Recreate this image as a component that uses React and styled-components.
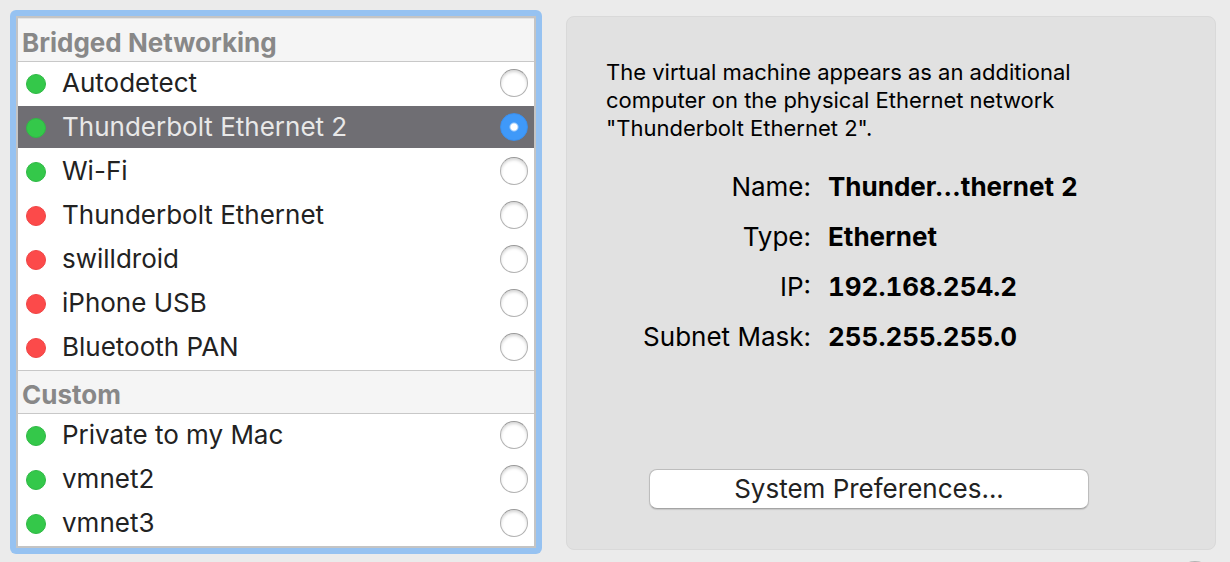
import React, { useState } from "react";
import styled, { createGlobalStyle } from "styled-components";

const GlobalStyle = createGlobalStyle`
  * { box-sizing: border-box; }
  body {
    margin: 0;
    overflow: hidden;
    background: #ebebeb;
    color: #000;
    font-family: Inter, "Liberation Sans", sans-serif;
    font-size: 26px;
  }
`;

const Page = styled.main`
  display: grid;
  grid-template-columns: 532fr 650fr;
  column-gap: 24px;
  align-items: start;
  padding: 10px 14px 0 10px;
`;

const NetworkList = styled.form`
  border-radius: 6px;
  padding: 6px;
  background: #96c2f1;
`;

const ListFrame = styled.div`
  border: 2px solid #c4c4c4;
  background: #fff;
`;

const Group = styled.fieldset`
  margin: 0;
  padding: 0;
  border: 0;
  min-width: 0;
`;

const GroupTitle = styled.legend`
  display: block;
  width: 100%;
  height: 44px;
  padding: 4px 4px 0;
  border-top: 1px solid ${(p) => (p.$first ? "#e4e4e4" : "#c8c8c8")};
  border-bottom: 1px solid #c8c8c8;
  background: #f5f5f5;
  color: #888;
  font-weight: 700;
  line-height: 40px;
`;

const Row = styled.label`
  display: flex;
  align-items: center;
  height: 44px;
  padding: 0 6px 0 8px;
  border-bottom: 2px solid #fff;
  background: ${(p) => (p.$selected ? "#6f6e73" : "#fff")};
  color: ${(p) => (p.$selected ? "#e8e8e8" : "#222")};
`;

const Status = styled.span`
  width: 20px;
  height: 20px;
  margin: 2px 16px 0 0;
  border-radius: 50%;
  border: 1px solid ${(p) => (p.$up ? "#2fb945" : "#f04545")};
  background: ${(p) => (p.$up ? "#34c84a" : "#fc4a4a")};
`;

const RowName = styled.span`
  flex: 1;
  line-height: 42px;
`;

const Radio = styled.input`
  appearance: none;
  width: 28px;
  height: 28px;
  margin: 0;
  border: 1px solid #b2b2b2;
  border-top-color: #989898;
  border-radius: 50%;
  background: #fff;
  box-shadow: inset 0 2px 3px rgba(0, 0, 0, 0.16);

  &:checked {
    border-color: #3a8fee;
    background: radial-gradient(circle, #fff 0 3px, #3f99f9 5px);
    box-shadow: none;
  }
`;

const Side = styled.div`
  display: flex;
  flex-direction: column;
  padding-top: 6px;
`;

const Details = styled.section`
  display: flex;
  flex-direction: column;
  padding: 41px 39px 40px;
  border: 1px solid #d9d9d9;
  border-radius: 8px;
  background: #e1e1e1;
`;

const Description = styled.p`
  max-width: 490px;
  margin: 0 0 20px;
  font-size: 22px;
  line-height: 28px;
`;

const Facts = styled.dl`
  display: grid;
  grid-template-columns: 205px 1fr;
  column-gap: 17px;
  margin: 0 0 107px;
  line-height: 50px;
`;

const FactName = styled.dt`
  text-align: right;
`;

const FactValue = styled.dd`
  margin: 0;
  font-weight: 700;
  font-variant-numeric: tabular-nums;
`;

const PreferencesButton = styled.button`
  width: 440px;
  height: 40px;
  margin-left: 43px;
  padding: 0 0 2px;
  border: 1px solid #bdbdbd;
  border-bottom-color: #a4a4a4;
  border-radius: 8px;
  background: #fff;
  box-shadow: 0 1px 1px rgba(0, 0, 0, 0.12);
  color: #222;
  font: inherit;
`;

const HelpButton = styled.button`
  align-self: flex-end;
  width: 42px;
  height: 42px;
  margin-top: 11px;
  border: 1px solid #b2b2b2;
  border-radius: 50%;
  background: #fff;
`;

const groups = [
  {
    title: "Bridged Networking",
    items: [
      ["Autodetect", true],
      ["Thunderbolt Ethernet 2", true],
      ["Wi-Fi", true],
      ["Thunderbolt Ethernet", false],
      ["swilldroid", false],
      ["iPhone USB", false],
      ["Bluetooth PAN", false],
    ],
  },
  {
    title: "Custom",
    items: [
      ["Private to my Mac", true],
      ["vmnet2", true],
      ["vmnet3", true],
    ],
  },
];

const facts = [
  ["Name:", "Thunder…thernet 2"],
  ["Type:", "Ethernet"],
  ["IP:", "192.168.254.2"],
  ["Subnet Mask:", "255.255.255.0"],
];

export default function App() {
  const [selected, setSelected] = useState("Thunderbolt Ethernet 2");
  return (
    <>
      <GlobalStyle />
      <Page>
        <NetworkList>
          <ListFrame>
            {groups.map((group, i) => (
              <Group key={group.title}>
                <GroupTitle $first={i === 0}>{group.title}</GroupTitle>
                {group.items.map(([name, up]) => (
                  <Row key={name} $selected={name === selected}>
                    <Status $up={up} />
                    <RowName>{name}</RowName>
                    <Radio
                      type="radio"
                      name="network"
                      checked={name === selected}
                      onChange={() => setSelected(name)}
                    />
                  </Row>
                ))}
              </Group>
            ))}
          </ListFrame>
        </NetworkList>
        <Side>
          <Details>
            <Description>
              The virtual machine appears as an additional computer on the
              physical Ethernet network "Thunderbolt Ethernet 2".
            </Description>
            <Facts>
              {facts.map(([name, value]) => (
                <React.Fragment key={name}>
                  <FactName>{name}</FactName>
                  <FactValue>{value}</FactValue>
                </React.Fragment>
              ))}
            </Facts>
            <PreferencesButton type="button">
              System Preferences...
            </PreferencesButton>
          </Details>
          <HelpButton type="button" aria-label="Help" />
        </Side>
      </Page>
    </>
  );
}
